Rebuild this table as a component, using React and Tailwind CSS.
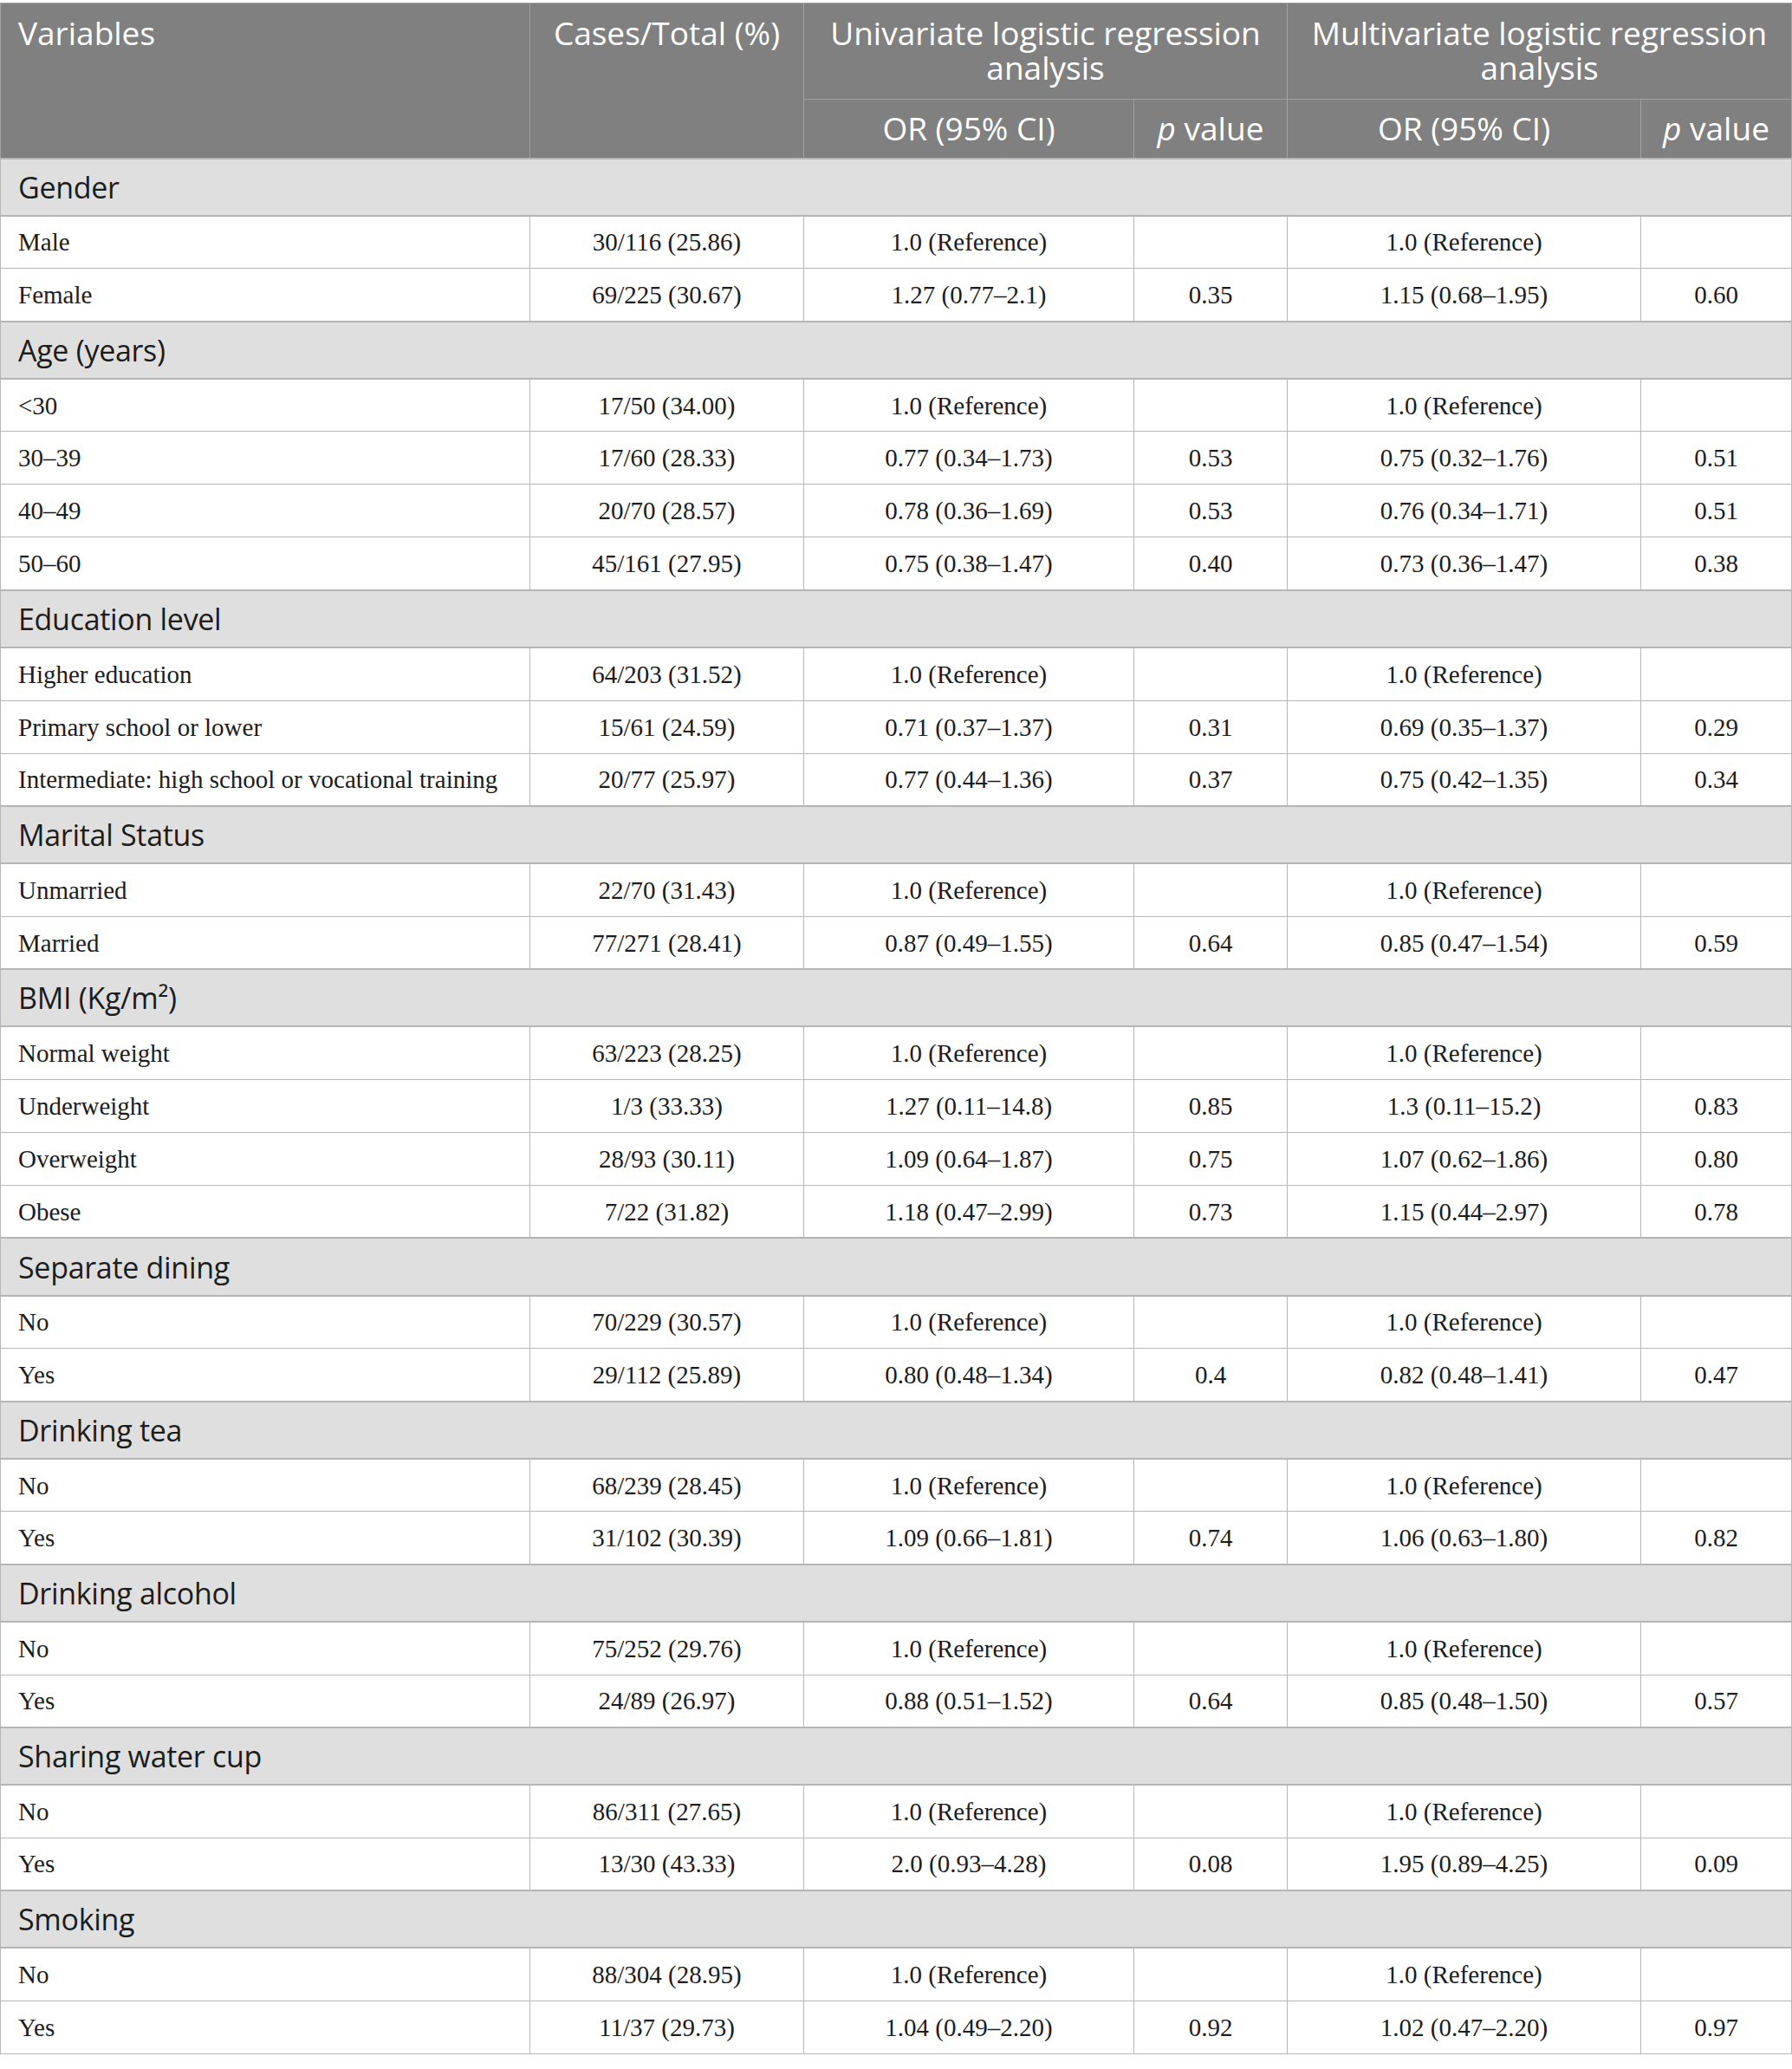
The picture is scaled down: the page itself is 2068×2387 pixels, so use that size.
import React from 'react';

// rows of the table: a string is a group heading, an array is a data row
const ROWS = [
  'Gender',
  ['Male', '30/116 (25.86)', '1.0 (Reference)', '', '1.0 (Reference)', ''],
  ['Female', '69/225 (30.67)', '1.27 (0.77–2.1)', '0.35', '1.15 (0.68–1.95)', '0.60'],
  'Age (years)',
  ['<30', '17/50 (34.00)', '1.0 (Reference)', '', '1.0 (Reference)', ''],
  ['30–39', '17/60 (28.33)', '0.77 (0.34–1.73)', '0.53', '0.75 (0.32–1.76)', '0.51'],
  ['40–49', '20/70 (28.57)', '0.78 (0.36–1.69)', '0.53', '0.76 (0.34–1.71)', '0.51'],
  ['50–60', '45/161 (27.95)', '0.75 (0.38–1.47)', '0.40', '0.73 (0.36–1.47)', '0.38'],
  'Education level',
  ['Higher education', '64/203 (31.52)', '1.0 (Reference)', '', '1.0 (Reference)', ''],
  ['Primary school or lower', '15/61 (24.59)', '0.71 (0.37–1.37)', '0.31', '0.69 (0.35–1.37)', '0.29'],
  ['Intermediate: high school or vocational training', '20/77 (25.97)', '0.77 (0.44–1.36)', '0.37', '0.75 (0.42–1.35)', '0.34'],
  'Marital Status',
  ['Unmarried', '22/70 (31.43)', '1.0 (Reference)', '', '1.0 (Reference)', ''],
  ['Married', '77/271 (28.41)', '0.87 (0.49–1.55)', '0.64', '0.85 (0.47–1.54)', '0.59'],
  'BMI (Kg/m²)',
  ['Normal weight', '63/223 (28.25)', '1.0 (Reference)', '', '1.0 (Reference)', ''],
  ['Underweight', '1/3 (33.33)', '1.27 (0.11–14.8)', '0.85', '1.3 (0.11–15.2)', '0.83'],
  ['Overweight', '28/93 (30.11)', '1.09 (0.64–1.87)', '0.75', '1.07 (0.62–1.86)', '0.80'],
  ['Obese', '7/22 (31.82)', '1.18 (0.47–2.99)', '0.73', '1.15 (0.44–2.97)', '0.78'],
  'Separate dining',
  ['No', '70/229 (30.57)', '1.0 (Reference)', '', '1.0 (Reference)', ''],
  ['Yes', '29/112 (25.89)', '0.80 (0.48–1.34)', '0.4', '0.82 (0.48–1.41)', '0.47'],
  'Drinking tea',
  ['No', '68/239 (28.45)', '1.0 (Reference)', '', '1.0 (Reference)', ''],
  ['Yes', '31/102 (30.39)', '1.09 (0.66–1.81)', '0.74', '1.06 (0.63–1.80)', '0.82'],
  'Drinking alcohol',
  ['No', '75/252 (29.76)', '1.0 (Reference)', '', '1.0 (Reference)', ''],
  ['Yes', '24/89 (26.97)', '0.88 (0.51–1.52)', '0.64', '0.85 (0.48–1.50)', '0.57'],
  'Sharing water cup',
  ['No', '86/311 (27.65)', '1.0 (Reference)', '', '1.0 (Reference)', ''],
  ['Yes', '13/30 (43.33)', '2.0 (0.93–4.28)', '0.08', '1.95 (0.89–4.25)', '0.09'],
  'Smoking',
  ['No', '88/304 (28.95)', '1.0 (Reference)', '', '1.0 (Reference)', ''],
  ['Yes', '11/37 (29.73)', '1.04 (0.49–2.20)', '0.92', '1.02 (0.47–2.20)', '0.97'],
];

const GroupRow = ({ label }) => (
  <tr className="h-[66.2px]">
    <td
      colSpan="6"
      className="bg-[#e0dfe0] border-y-2 border-x border-[#b5b5b5] px-5 align-middle font-['Open_Sans',sans-serif] text-[34px] tracking-[-0.3px] leading-[40px] text-[#1c1c1c]"
    >
      {label}
    </td>
  </tr>
);

const DataRow = ({ cells }) => (
  <tr className="h-[61px]">
    {cells.map((c, i) => (
      <td
        key={i}
        className={
          "border border-[#b8b8b8] align-middle font-['Liberation_Serif',serif] text-[29px] leading-[36px] text-[#1c1c1c] " +
          (i === 0 ? 'px-5 text-left' : 'px-2 text-center')
        }
      >
        {c}
      </td>
    ))}
  </tr>
);

export default function App() {
  return (
    <div className="bg-white w-[2068px] min-h-[2387px] pt-[3px]">
      <table className="table-fixed border-collapse w-[2067px] border border-[#bdbdbd]">
        <colgroup>
          <col className="w-[611px]" />
          <col className="w-[316px]" />
          <col className="w-[381px]" />
          <col className="w-[177px]" />
          <col className="w-[408px]" />
          <col className="w-[174px]" />
        </colgroup>
        <thead className="bg-[#7f807f] text-white font-['Open_Sans',sans-serif] text-[37px] leading-[40px] font-normal">
          <tr className="h-[111px]">
            <th rowSpan="2" className="border border-[#a3a3a3] px-5 pt-[14px] align-top text-left font-normal">
              Variables
            </th>
            <th rowSpan="2" className="border border-[#a3a3a3] px-2 pt-[14px] align-top text-center font-normal">
              Cases/Total (%)
            </th>
            <th colSpan="2" className="border border-[#a3a3a3] px-2 pt-[14px] pb-[15px] align-top text-center font-normal">
              Univariate logistic regression analysis
            </th>
            <th colSpan="2" className="border border-[#a3a3a3] px-2 pt-[14px] pb-[15px] align-top text-center font-normal">
              Multivariate logistic regression analysis
            </th>
          </tr>
          <tr className="h-[68px]">
            <th className="border border-[#a3a3a3] px-2 align-middle text-center font-normal">OR (95% CI)</th>
            <th className="border border-[#a3a3a3] px-2 align-middle text-center font-normal">
              <i>p</i> value
            </th>
            <th className="border border-[#a3a3a3] px-2 align-middle text-center font-normal">OR (95% CI)</th>
            <th className="border border-[#a3a3a3] px-2 align-middle text-center font-normal">
              <i>p</i> value
            </th>
          </tr>
        </thead>
        <tbody>
          {ROWS.map((r, i) =>
            typeof r === 'string' ? <GroupRow key={i} label={r} /> : <DataRow key={i} cells={r} />
          )}
        </tbody>
      </table>
    </div>
  );
}
